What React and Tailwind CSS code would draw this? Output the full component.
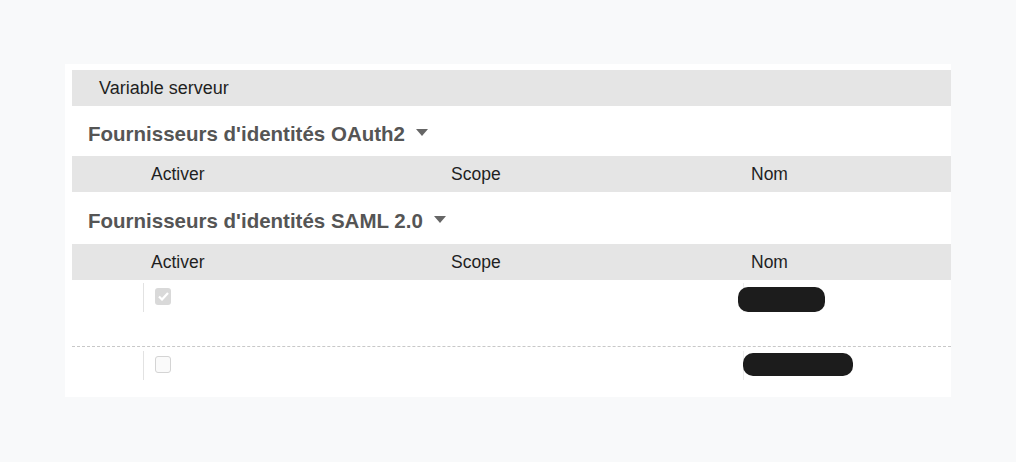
const FONT = "font-['Liberation_Sans',Arial,sans-serif]"

function Caret() {
  return (
    <svg width="12" height="7" viewBox="0 0 12 7" className="ml-[11px] mt-[-4px]">
      <path d="M0 0 L12 0 L6 7 Z" fill="#666" />
    </svg>
  )
}

function SectionTitle({ children, height }) {
  return (
    <div className={`flex items-center pl-[16px] pt-[6px] ${height}`}>
      <h2 className="text-[20.5px] font-bold leading-none text-[#555]">{children}</h2>
      <Caret />
    </div>
  )
}

function HeaderRow() {
  return (
    <div className="grid h-[36px] grid-cols-[71px_300px_300px_1fr] items-center bg-[#e5e5e5] text-[17.5px] text-[#1f1f1f]">
      <div />
      <div className="pl-[8px]">Activer</div>
      <div className="pl-[8px]">Scope</div>
      <div className="pl-[8px]">Nom</div>
    </div>
  )
}

function Checkbox({ checked }) {
  if (checked) {
    return (
      <span className="flex h-[17px] w-[16px] items-center justify-center rounded-[3px] bg-[#d9d9d9]">
        <svg width="11" height="9" viewBox="0 0 11 9">
          <path d="M1 4.5 L4 7.5 L10 1" stroke="#fff" strokeWidth="2.2" fill="none" />
        </svg>
      </span>
    )
  }
  return <span className="block h-[17px] w-[16px] rounded-[3px] border border-[#d4d4d4] bg-[#fafafa]" />
}

function Row({ checked, blobWidth, blobOffset, padTop, dashed, height }) {
  return (
    <div
      className={`grid grid-cols-[71px_300px_300px_1fr] ${height} ${padTop} ${
        dashed ? "border-b border-dashed border-[#c8c8c8]" : ""
      }`}
    >
      <div />
      <div className="h-[29px] border-l border-[#e2e2e2] pl-[11px] pt-[5px]">
        <Checkbox checked={checked} />
      </div>
      <div />
      <div className="h-[29px] border-l border-[#ececec]">
        <div className={`rounded-[10px] bg-[#1c1c1c] ${blobWidth} ${blobOffset}`} />
      </div>
    </div>
  )
}

export default function App() {
  return (
    <div className={`min-h-screen bg-[#f8f9fa] pl-[65px] pt-[64px] ${FONT}`}>
      <div className="w-[886px] bg-white pb-[12px] pl-[7px] pt-[6px]">
        <div className="flex h-[36px] items-center bg-[#e5e5e5] pl-[27px] text-[18px] text-[#1f1f1f]">
          Variable serveur
        </div>
        <SectionTitle height="h-[50px]">Fournisseurs d'identités OAuth2</SectionTitle>
        <HeaderRow />
        <SectionTitle height="h-[52px]">Fournisseurs d'identités SAML 2.0</SectionTitle>
        <HeaderRow />
        <Row
          checked
          dashed
          height="h-[67px]"
          padTop="pt-[3px]"
          blobWidth="w-[87px] h-[25px]"
          blobOffset="-ml-[6px] mt-[4px]"
        />
        <Row
          height="h-[38px]"
          padTop="pt-[4px]"
          blobWidth="w-[110px] h-[23px]"
          blobOffset="-ml-[1px] mt-[2px]"
        />
      </div>
    </div>
  )
}
